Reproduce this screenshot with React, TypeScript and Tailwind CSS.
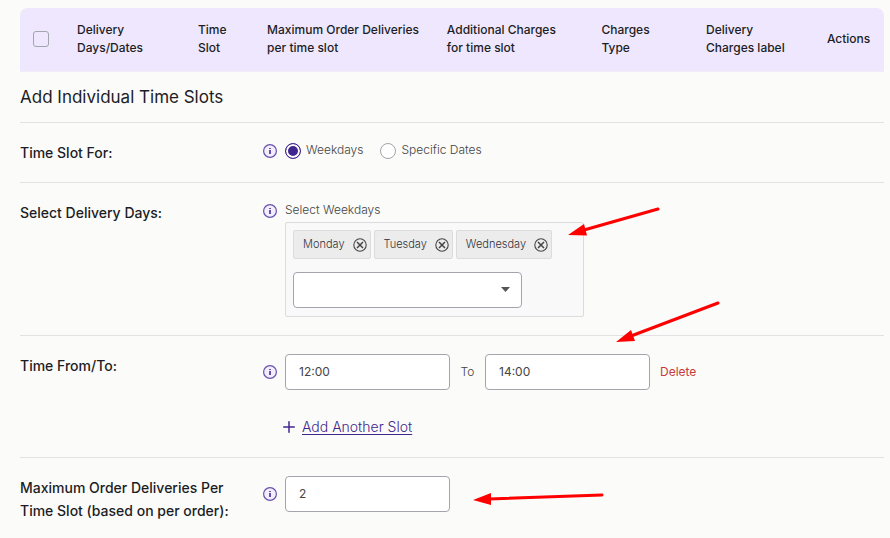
import React, { useState } from 'react';
import { Plus } from 'lucide-react';

const columns = [
  { lines: ['Delivery', 'Days/Dates'], width: 'w-[14%]' },
  { lines: ['Time', 'Slot'], width: 'w-[8%]' },
  { lines: ['Maximum Order Deliveries', 'per time slot'], width: 'w-[20.8%]' },
  { lines: ['Additional Charges', 'for time slot'], width: 'w-[17.9%]' },
  { lines: ['Charges', 'Type'], width: 'w-[12.1%]' },
  { lines: ['Delivery', 'Charges label'], width: 'w-[14%]' },
  { lines: ['Actions'], width: 'w-[6.6%]' },
];

const weekdays = ['Monday', 'Tuesday', 'Wednesday', 'Thursday', 'Friday', 'Saturday', 'Sunday'];

const inputClass =
  'h-9 w-[165px] rounded border border-[#a3a5ad] bg-white px-[13px] text-xs text-[#444] outline-none focus:border-[#41278d]';

function InfoIcon() {
  return (
    <svg className="h-3.5 w-3.5 shrink-0" viewBox="0 0 14 14" aria-hidden="true">
      <circle cx="7" cy="7" r="6.4" fill="#f3eefe" stroke="#6750ab" strokeWidth="1.2" />
      <rect x="6" y="4" width="2" height="1" fill="#6750ab" />
      <rect x="6" y="6" width="2" height="4" fill="#6750ab" />
    </svg>
  );
}

function RemoveIcon() {
  return (
    <svg className="h-3.5 w-3.5" viewBox="0 0 14 14" fill="none" stroke="#444" aria-hidden="true">
      <circle cx="7" cy="7" r="6.2" strokeWidth="1.1" />
      <path d="M4 4l6 6M10 4l-6 6" strokeWidth="1.5" />
    </svg>
  );
}

function Row({
  label,
  htmlFor,
  iconClass,
  children,
}: {
  label: string;
  htmlFor?: string;
  iconClass: string;
  children: React.ReactNode;
}) {
  const labelClass = 'block text-sm font-medium leading-[23px] text-[#1d1d25]';
  return (
    <div className="flex border-t border-[#e2e2e4] py-[18px]">
      <div className="w-[243px] shrink-0 pr-6">
        {htmlFor ? (
          <label htmlFor={htmlFor} className={labelClass}>{label}</label>
        ) : (
          <div className={labelClass}>{label}</div>
        )}
      </div>
      <div className={`mr-2 flex shrink-0 items-center self-start ${iconClass}`}>
        <InfoIcon />
      </div>
      <div className="min-w-0 flex-1">{children}</div>
    </div>
  );
}

function Arrows() {
  return (
    <svg
      className="pointer-events-none absolute left-0 top-0"
      width="890"
      height="538"
      viewBox="0 0 890 538"
      fill="#fe0000"
      stroke="#fe0000"
      aria-hidden="true"
    >
      <path d="M658 209L584 230M718 303L631 336M602 495L489 499" strokeWidth="3" strokeLinecap="round" />
      <path d="M568 235L584 224L587 235.500ZM616 342L631 330L635 341ZM473 500L491 493L491 505Z" stroke="none" />
    </svg>
  );
}

export default function App() {
  const [slotFor, setSlotFor] = useState('weekdays');
  const [days, setDays] = useState(['Monday', 'Tuesday', 'Wednesday']);
  const [slots, setSlots] = useState([{ from: '12:00', to: '14:00' }]);

  const updateSlot = (index: number, key: 'from' | 'to', value: string) => {
    setSlots(prev => prev.map((slot, i) => (i === index ? { ...slot, [key]: value } : slot)));
  };

  return (
    <div className="relative min-h-screen overflow-x-hidden bg-[#fbfbf9] pl-5 pr-1.5 pt-2 font-['Inter',sans-serif]">
      <table className="w-full table-fixed">
        <thead>
          <tr className="h-[63px] text-left text-xs leading-[18px] text-[#1d1d25]">
            <th className="w-[6.6%] rounded-tl-lg border-b border-[#f0ecf8] bg-[#eee7fe] pl-[13px]">
              <input
                type="checkbox"
                aria-label="Select all time slots"
                className="block h-4 w-4 appearance-none rounded-[3px] border border-[#a3a5ad] checked:bg-[#41278d]"
              />
            </th>
            {columns.map((column, index) => (
              <th
                key={index}
                className={`border-b border-[#f0ecf8] bg-[#eee7fe] font-medium last:rounded-tr-lg ${column.width}`}
              >
                {column.lines.map(line => (
                  <span key={line} className="block whitespace-nowrap">{line}</span>
                ))}
              </th>
            ))}
          </tr>
        </thead>
      </table>

      <h2 className="pb-[13px] pt-[13px] text-[17px] font-normal leading-6 text-[#1d1d25]">Add Individual Time Slots</h2>

      <Row label="Time Slot For:" iconClass="h-5">
        <div className="flex h-5 items-center gap-[17px] text-xs font-light text-[#444]">
          {[
            { value: 'weekdays', label: 'Weekdays' },
            { value: 'dates', label: 'Specific Dates' },
          ].map(option => (
            <label key={option.value} className="flex items-center gap-[5px] leading-[18px]">
              <input
                type="radio"
                name="slotFor"
                checked={slotFor === option.value}
                onChange={() => setSlotFor(option.value)}
                className="h-4 w-4 appearance-none rounded-full border border-[#a3a5ad] bg-white checked:border-[#41278d] checked:bg-[#41278d] checked:shadow-[inset_0_0_0_2px_#fff]"
              />
              <span className="pb-0.5">{option.label}</span>
            </label>
          ))}
        </div>
      </Row>

      <Row label="Select Delivery Days:" iconClass="h-[21px]">
        <label htmlFor="days" className="mb-[3px] block text-xs font-light leading-[18px] text-[#444]">
          Select Weekdays
        </label>
        <div className="w-[299px] rounded-xs border border-[#dcdcde] bg-[#f9f9f9] px-[7px] pb-2 pt-[7px]">
          <div className="flex flex-wrap gap-[3px]">
            {days.map(day => (
              <span
                key={day}
                className="flex h-[29px] items-center gap-2 rounded-xs border border-[#dcdcdc] bg-[#ececec] pl-[9px] pr-[3px] text-[11px] font-light text-[#33333b]"
              >
                {day}
                <button
                  type="button"
                  aria-label={`Remove ${day}`}
                  onClick={() => setDays(prev => prev.filter(d => d !== day))}
                  className="pt-0.5"
                >
                  <RemoveIcon />
                </button>
              </span>
            ))}
          </div>
          <div className="relative mt-[13px] w-[229px]">
            <select
              id="days"
              value=""
              onChange={e => setDays(prev => [...prev, e.target.value])}
              className="block h-9 w-full appearance-none rounded border border-[#a3a5ad] bg-white px-[13px] text-xs text-[#444] outline-none"
            >
              <option value=""></option>
              {weekdays.filter(day => !days.includes(day)).map(day => (
                <option key={day} value={day}>{day}</option>
              ))}
            </select>
            <svg
              className="pointer-events-none absolute right-3 top-[15px]"
              width="9"
              height="5"
              viewBox="0 0 9 5"
              fill="#555"
              aria-hidden="true"
            >
              <path d="M0 0h9L4.500 5z" />
            </svg>
          </div>
        </div>
      </Row>

      <Row label="Time From/To:" iconClass="h-9">
        {slots.map((slot, index) => (
          <div key={index} className="flex items-center text-xs font-light text-[#444]">
            <input
              type="text"
              aria-label="Time from"
              value={slot.from}
              onChange={e => updateSlot(index, 'from', e.target.value)}
              className={`font-normal ${inputClass}`}
            />
            <span className="w-[35px] text-center">To</span>
            <input
              type="text"
              aria-label="Time to"
              value={slot.to}
              onChange={e => updateSlot(index, 'to', e.target.value)}
              className={`font-normal ${inputClass}`}
            />
            <button
              type="button"
              onClick={() => setSlots(prev => prev.filter((_, i) => i !== index))}
              className="ml-2.5 font-normal text-[#c83a3a]"
            >
              Delete
            </button>
          </div>
        ))}
        <a
          href="#add-slot"
          onClick={e => {
            e.preventDefault();
            setSlots(prev => [...prev, { from: '', to: '' }]);
          }}
          className="mt-[25px] flex w-fit items-center gap-1 text-sm font-light leading-6 text-[#41278d]"
        >
          <Plus className="-ml-[5px] h-[18px] w-[18px]" strokeWidth={2} />
          <span className="underline underline-offset-2">Add Another Slot</span>
        </a>
      </Row>

      <Row label="Maximum Order Deliveries Per Time Slot (based on per order):" htmlFor="maxOrders" iconClass="h-9">
        <input id="maxOrders" type="text" defaultValue="2" className={`block ${inputClass}`} />
      </Row>

      <Arrows />
    </div>
  );
}
